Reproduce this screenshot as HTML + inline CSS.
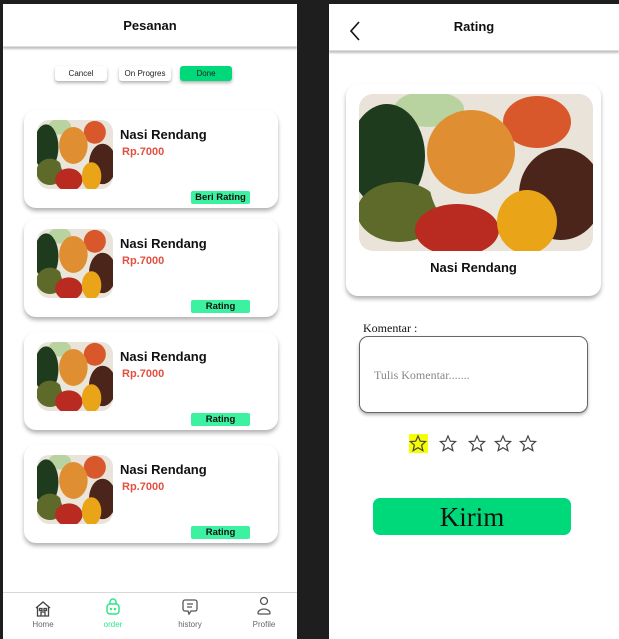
<!DOCTYPE html>
<html><head><meta charset="utf-8"><style>
*{box-sizing:border-box;margin:0;padding:0}
body{width:619px;height:639px;background:#1e1e1e;position:relative;overflow:hidden;font-family:"Liberation Sans",sans-serif}
.abs{position:absolute}
.panel{position:absolute;background:#fff}
.hdr{position:absolute;left:0;right:0;top:0;height:43px;background:#fff;box-shadow:0 2px 2px rgba(0,0,0,.25);border-bottom:1px solid #ddd}
.title{position:absolute;width:100%;text-align:center;font-weight:bold;font-size:13px;color:#111}
.tab{position:absolute;top:62px;height:15px;width:52px;background:#fff;border-radius:3px;box-shadow:0 2px 3px rgba(0,0,0,.3);font-size:8px;text-align:center;line-height:15px;font-family:"Liberation Sans Narrow","Liberation Sans",sans-serif;color:#222}
.card{position:absolute;left:21px;width:254px;height:98px;background:#fff;border-radius:12px;box-shadow:0 3px 4px rgba(0,0,0,.3)}
.card svg{position:absolute;left:13px;top:10px;width:76px;height:69px;border-radius:12px}
.card .n{position:absolute;left:96px;top:17px;font-weight:bold;font-size:13px;color:#111}
.card .p{position:absolute;left:98px;top:36px;font-weight:bold;font-size:11px;color:#e2503f}
.card .b{position:absolute;left:167px;top:81px;width:59px;height:13px;background:#3cf2a0;border-radius:2px;font-weight:bold;font-size:9.5px;text-align:center;line-height:13px;color:#111}
.nav{position:absolute;top:596px;font-size:8px;color:#666;text-align:center;width:50px}
</style></head><body>
<svg width="0" height="0" style="position:absolute"><defs>
<g id="food">
<rect width="234" height="157" fill="#e9e3d9"/>
<ellipse cx="70" cy="15" rx="35" ry="18" fill="#b9d3a0"/>
<ellipse cx="28" cy="62" rx="38" ry="52" fill="#1f3b1d"/>
<ellipse cx="40" cy="118" rx="42" ry="30" fill="#5d6a2a"/>
<ellipse cx="178" cy="28" rx="34" ry="26" fill="#d8582b"/>
<ellipse cx="118" cy="85" rx="48" ry="55" fill="#ebe6dc"/>
<ellipse cx="112" cy="58" rx="44" ry="42" fill="#df8f32"/>
<ellipse cx="202" cy="100" rx="42" ry="46" fill="#4b2519"/>
<ellipse cx="98" cy="136" rx="42" ry="26" fill="#b92a20"/>
<ellipse cx="168" cy="128" rx="30" ry="32" fill="#e9a417"/>
</g></defs></svg>

<!-- LEFT -->
<div class="panel" style="left:3px;top:4px;width:294px;height:635px">
 <div class="hdr"><div class="title" style="top:14px">Pesanan</div></div>
 <div class="tab" style="left:52px">Cancel</div>
 <div class="tab" style="left:116px">On Progres</div>
 <div class="tab" style="left:177px;background:#00d97a">Done</div>
 <div class="card" style="top:106px"><svg viewBox="0 0 234 157" preserveAspectRatio="none"><use href="#food"/></svg><div class="n">Nasi Rendang</div><div class="p">Rp.7000</div><div class="b">Beri Rating</div></div>
 <div class="card" style="top:215px"><svg viewBox="0 0 234 157" preserveAspectRatio="none"><use href="#food"/></svg><div class="n">Nasi Rendang</div><div class="p">Rp.7000</div><div class="b">Rating</div></div>
 <div class="card" style="top:328px"><svg viewBox="0 0 234 157" preserveAspectRatio="none"><use href="#food"/></svg><div class="n">Nasi Rendang</div><div class="p">Rp.7000</div><div class="b">Rating</div></div>
 <div class="card" style="top:441px"><svg viewBox="0 0 234 157" preserveAspectRatio="none"><use href="#food"/></svg><div class="n">Nasi Rendang</div><div class="p">Rp.7000</div><div class="b">Rating</div></div>
 <div class="abs" style="left:0;right:0;top:588px;border-top:1px solid #d8d8d8"></div>
 <svg class="abs" style="left:31px;top:596px" width="18" height="18" viewBox="0 0 18 18" fill="none" stroke="#444" stroke-width="1.3"><path d="M2 8 L9 2 L16 8 M3.5 7 V16 H14.5 V7 M7 16 V12 H11 V16"/><rect x="5.5" y="8.5" width="2.5" height="2" /><rect x="10" y="8.5" width="2.5" height="2"/></svg>
 <div class="nav" style="left:15px;top:616px">Home</div>
 <svg class="abs" style="left:101px;top:594px" width="18" height="18" viewBox="0 0 18 18" fill="none" stroke="#2ee68c" stroke-width="1.5"><path d="M6 6 V4 a3 3 0 0 1 6 0 V6"/><rect x="3" y="6" width="12" height="10" rx="3"/><circle cx="7" cy="11" r=".5"/><circle cx="11" cy="11" r=".5"/></svg>
 <div class="nav" style="left:85px;top:616px;color:#2ee68c">order</div>
 <svg class="abs" style="left:178px;top:594px" width="18" height="18" viewBox="0 0 18 18" fill="none" stroke="#555" stroke-width="1.3"><path d="M4 2 H14 a2 2 0 0 1 2 2 V11 a2 2 0 0 1-2 2 H10 L8 16 L7 13 H4 a2 2 0 0 1-2-2 V4 a2 2 0 0 1 2-2 Z M6 6 H12 M6 9 H11"/></svg>
 <div class="nav" style="left:162px;top:616px">history</div>
 <svg class="abs" style="left:252px;top:592px" width="18" height="20" viewBox="0 0 18 20" fill="none" stroke="#555" stroke-width="1.3"><circle cx="9" cy="5" r="3.5"/><path d="M3 17 a6 4 0 0 1 12 0 a1 1 0 0 1-1 1 H4 a1 1 0 0 1-1-1Z"/></svg>
 <div class="nav" style="left:236px;top:616px">Profile</div>
</div>

<!-- RIGHT -->
<div class="panel" style="left:329px;top:4px;width:290px;height:635px">
 <div class="hdr" style="height:47px"><div class="title" style="top:15px">Rating</div>
  <svg class="abs" style="left:20px;top:16px" width="12" height="22" viewBox="0 0 12 22" fill="none" stroke="#111" stroke-width="1.6"><path d="M10 2 L2 11 L10 20"/></svg></div>
 <div class="abs" style="left:17px;top:80px;width:255px;height:212px;background:#fff;border-radius:12px;box-shadow:0 3px 4px rgba(0,0,0,.3)">
  <svg class="abs" style="left:13px;top:10px;width:234px;height:157px;border-radius:14px" viewBox="0 0 234 157" preserveAspectRatio="none"><use href="#food"/></svg>
  <div class="title" style="top:176px">Nasi Rendang</div>
 </div>
 <div class="abs" style="left:34px;top:317px;font-family:'Liberation Serif',serif;font-size:12px;color:#111">Komentar :</div>
 <div class="abs" style="left:30px;top:332px;width:229px;height:77px;border:1px solid #666;border-radius:9px;box-shadow:0 2px 3px rgba(0,0,0,.3);background:#fff"><div style="position:absolute;left:14px;top:31px;font-family:'Liberation Serif',serif;font-size:12px;color:#888">Tulis Komentar.......</div></div>
 <div class="abs" style="left:80px;top:430px;width:19px;height:19px;background:#f5ff00"></div>
 <svg class="abs" style="left:0;top:0" width="290" height="460" fill="none" stroke="#444" stroke-width="1.2">
  <defs><path id="st" d="M0 -8 L2.3 -2.8 L7.6 -2.5 L3.6 1.2 L4.9 6.6 L0 3.7 L-4.9 6.6 L-3.6 1.2 L-7.6 -2.5 L-2.3 -2.8 Z"/></defs>
  <use href="#st" x="89" y="440"/><use href="#st" x="119" y="440"/><use href="#st" x="148" y="440"/><use href="#st" x="174" y="440"/><use href="#st" x="199" y="440"/>
 </svg>
 <div class="abs" style="left:44px;top:494px;width:198px;height:37px;background:#00d97a;border-radius:7px;text-align:center;font-family:'Liberation Serif',serif;font-size:27px;line-height:39px;color:#111">Kirim</div>
</div>
</body></html>
